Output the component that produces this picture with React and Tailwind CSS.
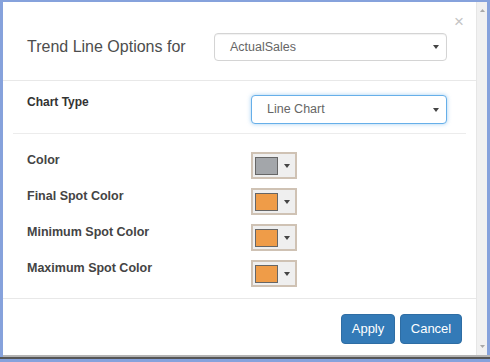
import React from "react";

const Caret = ({ className = "" }) => (
  <svg width="6" height="4" viewBox="0 0 6 4" className={className} aria-hidden="true">
    <path d="M0 0 L6 0 L3 4 Z" fill="#444" />
  </svg>
);

const Select = ({ value, focused, width, height }) => (
  <div
    className={`flex items-center justify-between rounded-[4px] bg-white pl-[15px] pr-[7px] border ${
      focused
        ? "border-[#66afe9] shadow-[0_0_4px_rgba(102,175,233,0.6)]"
        : "border-[#d4d4d4] shadow-[inset_0_1px_1px_rgba(0,0,0,0.06)]"
    } ${width} ${height}`}
  >
    <span className="text-[12.5px] text-[#666]">{value}</span>
    <Caret />
  </div>
);

const ColorPicker = ({ swatch }) => (
  <div className="flex items-center w-[46px] h-[27px] border-2 border-[#cfc2b4] bg-[#efefef] pl-[2px]">
    <div className={`w-[23px] h-[18px] border border-[#666] ${swatch}`} />
    <Caret className="ml-[6px]" />
  </div>
);

const rows = [
  { label: "Color", swatch: "bg-[#a3a6aa]" },
  { label: "Final Spot Color", swatch: "bg-[#ef9c48]" },
  { label: "Minimum Spot Color", swatch: "bg-[#ef9c48]" },
  { label: "Maximum Spot Color", swatch: "bg-[#ef9c48]" },
];

export default function App() {
  return (
    <div className="w-[490px] h-[362px] bg-white font-['Liberation_Sans',Arial,sans-serif] flex flex-col">
      <div className="flex flex-1 border-t-2 border-l-[3px] border-r-[3px] border-[#86a2dc]">
        <div className="flex-1 flex flex-col">
          <header className="relative flex items-center pl-[24px] pt-[31px] pb-[19px] border-b border-[#e8e8e8]">
            <h1 className="w-[187px] text-[16px] text-[#4d4d4d]">Trend Line Options for</h1>
            <Select value="ActualSales" width="w-[233px]" height="h-[28px]" />
            <span className="absolute top-[11px] right-[12px] text-[17px] leading-none text-[#c4c4c4]">×</span>
          </header>

          <div className="flex items-start pl-[24px] pt-[14px] pb-[9px]">
            <span className="w-[224px] text-[12px] leading-[14px] font-bold text-[#333]">Chart Type</span>
            <Select value="Line Chart" focused width="w-[196px]" height="h-[29px]" />
          </div>
          <div className="mx-[10px] border-t border-[#ececec]" />

          <div className="flex flex-col gap-[9px] pl-[24px] pt-[18px] pb-[11px] border-b border-[#e8e8e8]">
            {rows.map((r) => (
              <div key={r.label} className="flex items-start">
                <span className="w-[224px] pt-[1px] text-[12.5px] leading-[14px] font-bold text-[#444]">{r.label}</span>
                <ColorPicker swatch={r.swatch} />
              </div>
            ))}
          </div>

          <footer className="flex justify-end gap-[5px] pt-[15px] pr-[14px]">
            <button
              type="button"
              className="w-[54px] h-[30px] rounded-[4px] bg-[#337ab7] border border-[#2e6da4] text-white text-[13px]"
            >
              Apply
            </button>
            <button
              type="button"
              className="w-[62px] h-[30px] rounded-[4px] bg-[#337ab7] border border-[#2e6da4] text-white text-[13px]"
            >
              Cancel
            </button>
          </footer>
        </div>

        <div className="w-[11px] bg-[#f1f1f1] border-l border-[#e6e6e6] flex flex-col items-center justify-between py-[7px]">
          <svg width="5" height="3" viewBox="0 0 5 3"><path d="M0 3 L5 3 L2.5 0 Z" fill="#a8a8a8" /></svg>
          <svg width="5" height="3" viewBox="0 0 5 3"><path d="M0 0 L5 0 L2.5 3 Z" fill="#a8a8a8" /></svg>
        </div>
      </div>
      <div className="h-[2px] bg-[#b4b4b4] border-l-[3px] border-[#86a2dc]" />
      <div className="h-[2px] bg-[#555]" />
      <div className="h-[3px] bg-[#86a2dc]" />
    </div>
  );
}
